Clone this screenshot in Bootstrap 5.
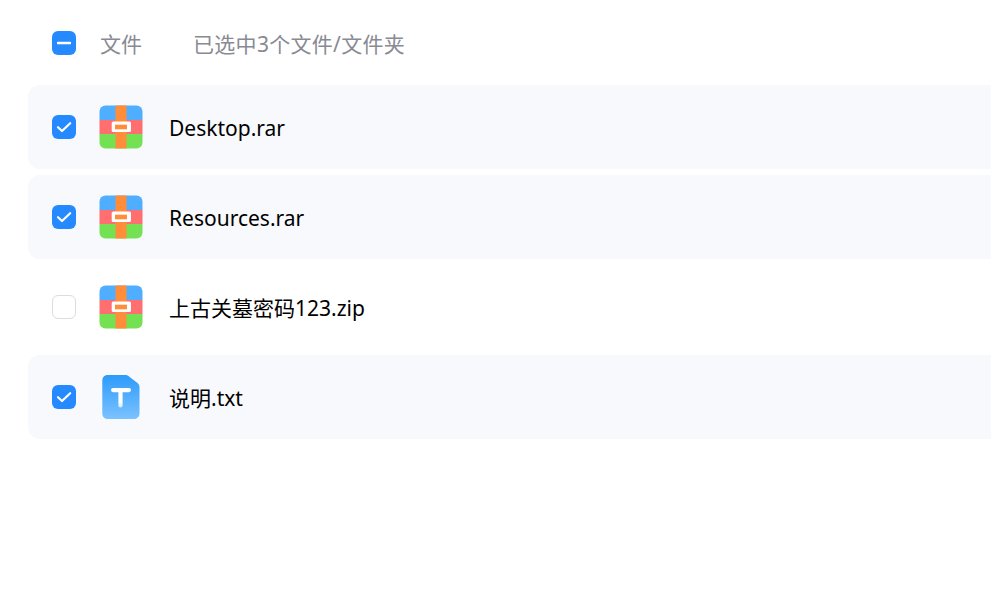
<!DOCTYPE html>
<html lang="zh">
<head>
<meta charset="utf-8">
<title>文件</title>
<link rel="stylesheet" href="https://cdn.jsdelivr.net/npm/bootstrap@5.3.0/dist/css/bootstrap.min.css">
<style>
body{background:#fff;font-family:"Noto Sans","Noto Sans CJK SC",sans-serif;font-size:21px;color:#000;overflow:hidden}
.file-list{padding:0 0 0 28px}
.head-row{height:85px;padding:0 0 0 24px}
.file-row{height:84px;margin-bottom:6px;padding-left:24px;border-radius:12px 0 0 12px}
.file-row.picked{background:#f8f9fd}
.tick{width:24px;height:24px;border-radius:6px;background:#2589ff;flex:none;display:flex;align-items:center;justify-content:center}
.tick.off{background:#fff;border:1.5px solid #dcdde0}
.head-row .tick{margin-top:1px}
.ficon{width:44px;height:44px;flex:none;margin-left:23px;display:block}
.fname{margin-left:26px;line-height:1;font-size:21px;padding-top:3px}
.htxt{color:#888a94;line-height:1;font-size:21px;padding-top:3px}
.col-lbl{margin-left:24px}
.sel-lbl{margin-left:51px;letter-spacing:.3px}
</style>
</head>
<body>
<svg width="0" height="0" class="d-block" aria-hidden="true">
<defs>
<linearGradient id="tg" x1="0" y1="0" x2="0" y2="1"><stop offset="0" stop-color="#2b9bfb"/><stop offset="1" stop-color="#7cc2ff"/></linearGradient>
<linearGradient id="sg" x1="0" y1="0" x2="0" y2="1"><stop offset="0" stop-color="#fff"/><stop offset=".7" stop-color="#fff"/><stop offset="1" stop-color="#fff" stop-opacity=".7"/></linearGradient>
<clipPath id="rc"><rect x=".5" y=".5" width="43" height="43" rx="6"/></clipPath>
<symbol id="rar" viewBox="0 0 44 44">
<g clip-path="url(#rc)">
<rect width="44" height="15" fill="#4faeff"/>
<rect y="15" width="44" height="14" fill="#ff6f6f"/>
<rect y="29" width="44" height="15" fill="#74e152"/>
<rect x="16.500" width="11" height="44" fill="#ff8d3a"/>
</g>
<rect x="12.700" y="16.500" width="19.300" height="10.500" rx="1.500" fill="#fff"/>
<rect x="16" y="19.700" width="12" height="4.600" fill="#ff8d3a"/>
</symbol>
</defs>
</svg>
<main class="file-list">
<div class="head-row d-flex align-items-center">
<span class="tick"><svg width="14" height="14" viewBox="0 0 14 14"><path d="M1 7h12" stroke="#fff" stroke-width="2.600" stroke-linecap="round" fill="none"/></svg></span>
<span class="htxt col-lbl">文件</span>
<span class="htxt sel-lbl">已选中3个文件/文件夹</span>
</div>
<div class="file-row picked d-flex align-items-center">
<span class="tick"><svg width="16" height="16" viewBox="0 0 16 16"><path d="M2 8.200l4 3.800 8.200-7.800" stroke="#fff" stroke-width="2.200" stroke-linecap="round" stroke-linejoin="round" fill="none"/></svg></span>
<svg class="ficon"><use href="#rar"/></svg>
<span class="fname">Desktop.rar</span>
</div>
<div class="file-row picked d-flex align-items-center">
<span class="tick"><svg width="16" height="16" viewBox="0 0 16 16"><path d="M2 8.200l4 3.800 8.200-7.800" stroke="#fff" stroke-width="2.200" stroke-linecap="round" stroke-linejoin="round" fill="none"/></svg></span>
<svg class="ficon"><use href="#rar"/></svg>
<span class="fname">Resources.rar</span>
</div>
<div class="file-row d-flex align-items-center">
<span class="tick off"></span>
<svg class="ficon"><use href="#rar"/></svg>
<span class="fname">上古关墓密码123.zip</span>
</div>
<div class="file-row picked d-flex align-items-center">
<span class="tick"><svg width="16" height="16" viewBox="0 0 16 16"><path d="M2 8.200l4 3.800 8.200-7.800" stroke="#fff" stroke-width="2.200" stroke-linecap="round" stroke-linejoin="round" fill="none"/></svg></span>
<svg class="ficon" viewBox="0 0 44 44"><path d="M9 0H26.500C28 0 29 .5 30 1.500L38.500 8C40 9.200 40.500 10.500 40.500 12.500V38C40.500 41.500 38.500 44 35 44H9C5 44 3.300 41.500 3.300 38V6C3.300 2.500 5 0 9 0Z" fill="url(#tg)"/><rect x="12" y="13" width="20" height="4.200" rx="2.100" fill="#fff"/><rect x="19.400" y="13" width="4.200" height="19.500" rx="2.100" fill="url(#sg)"/></svg>
<span class="fname">说明.txt</span>
</div>
</main>
</body>
</html>
